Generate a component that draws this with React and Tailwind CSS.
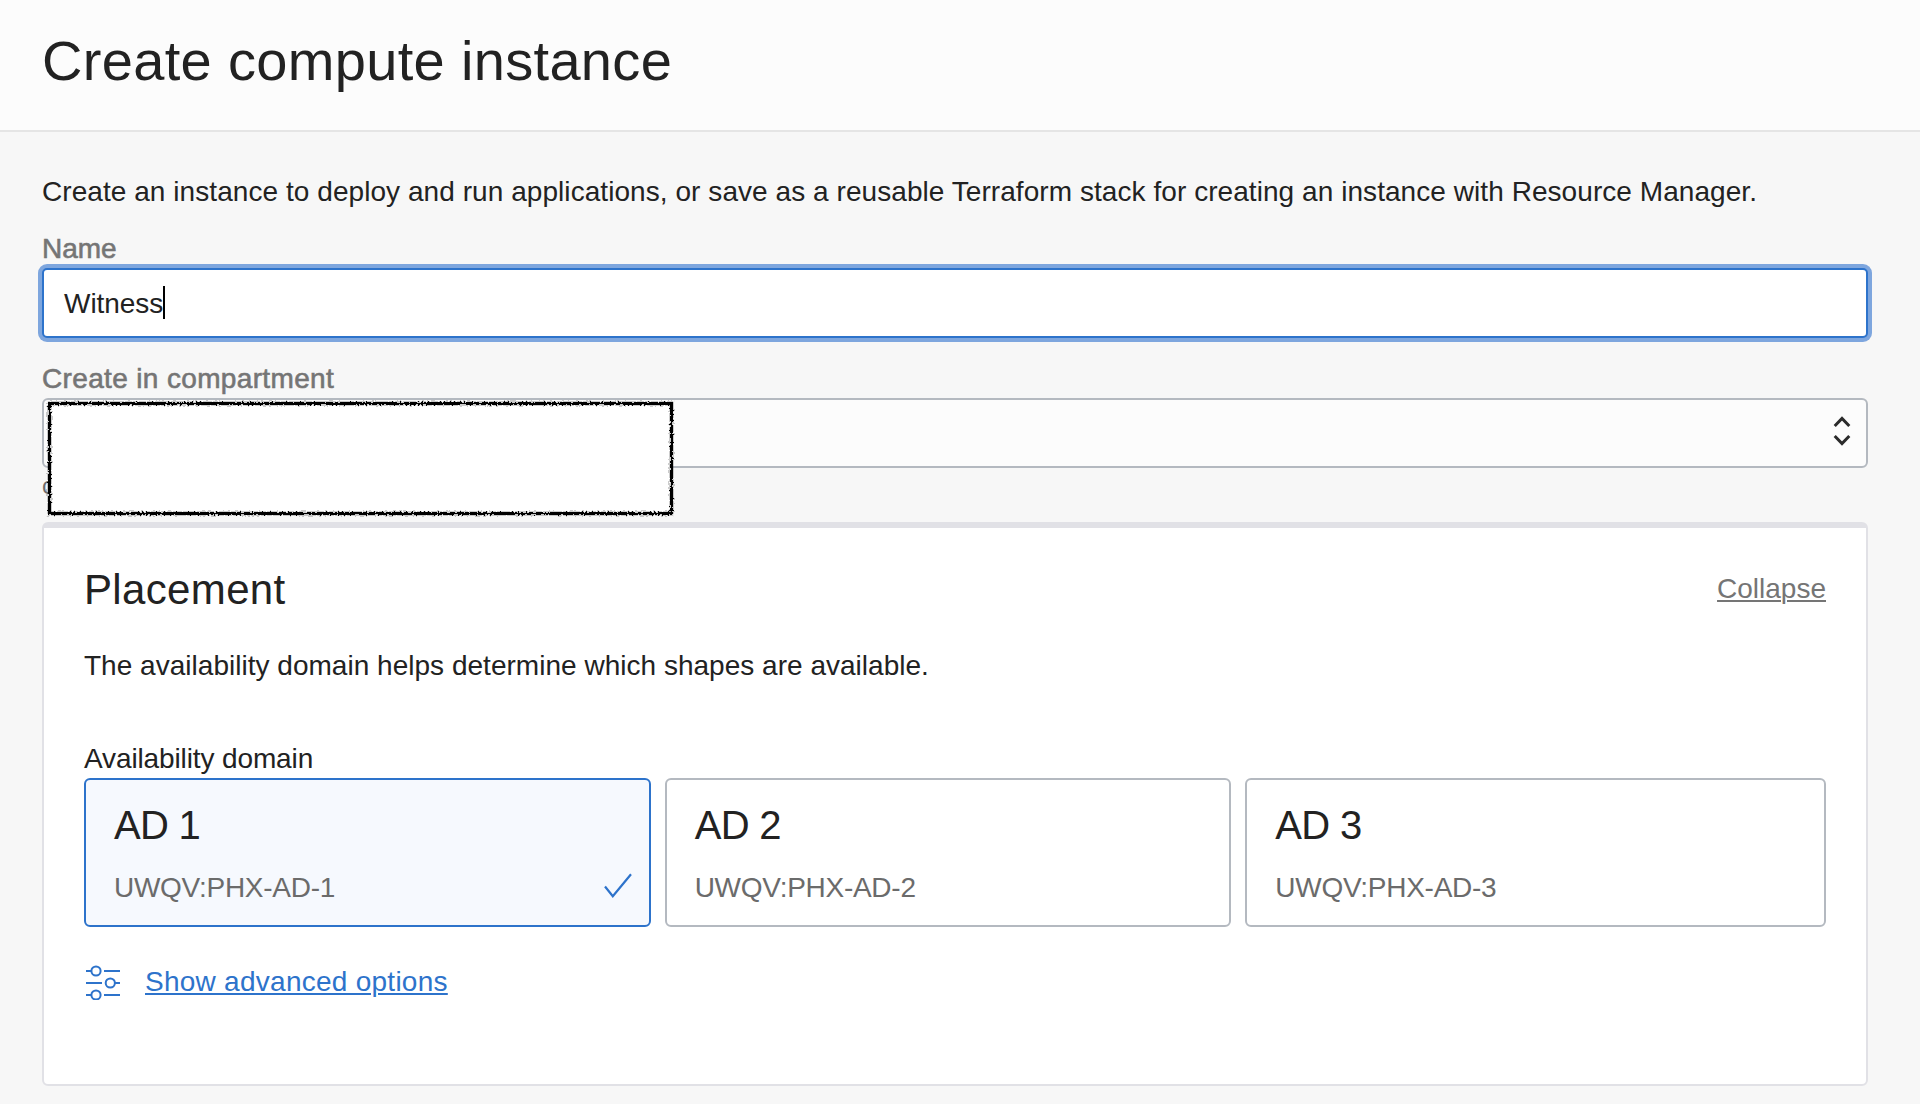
const domains = [
  { title: "AD 1", name: "UWQV:PHX-AD-1", selected: true },
  { title: "AD 2", name: "UWQV:PHX-AD-2" },
  { title: "AD 3", name: "UWQV:PHX-AD-3" },
];

function Header() {
  return (
    <header className="h-[132px] border-b-2 border-[#e5e5e5] bg-[#fcfcfc] px-[42px] pt-[29px]">
      <h1 className="text-[56px] leading-16 tracking-[0.33px]">Create compute instance</h1>
    </header>
  );
}

function Label({ children, className = "" }) {
  return (
    <label
      className={
        "mt-[25px] mb-[3px] block leading-8 text-[#757575] [-webkit-text-stroke:0.6px_#757575] " + className
      }
    >
      {children}
    </label>
  );
}

function NameInput() {
  return (
    <div className="flex h-[70px] items-center rounded-[5px] border-2 border-[#2d73cb] bg-white pl-5 ring-4 ring-[#7ea6de]">
      <span className="mt-0.5 leading-8 tracking-[-0.05px]">Witness</span>
      <span className="-mt-0.5 h-[33px] w-0.5 bg-black" />
    </div>
  );
}

function CompartmentSelect() {
  return (
    <div className="flex h-[70px] items-center justify-end rounded-md border-2 border-[#b4b9c0] bg-[#fcfcfc] pr-3.5">
      <svg width="20" height="34" viewBox="0 0 20 34" fill="none" stroke="#2b2b2b" strokeWidth="3" className="-mt-1">
        <path d="M2.700 12 10 4.500l7.300 7.500M2.700 22 10 29.500l7.300-7.500" />
      </svg>
    </div>
  );
}

function Redaction() {
  return (
    <svg className="absolute top-0 left-0" width="640" height="122" viewBox="0 0 640 122">
      <defs>
        <filter id="rough" x="-2%" y="-8%" width="104%" height="116%">
          <feTurbulence type="fractalNoise" baseFrequency="0.5" numOctaves="2" seed="4" />
          <feDisplacementMap in="SourceGraphic" scale="4" xChannelSelector="R" yChannelSelector="G" />
        </filter>
      </defs>
      <rect x="7.500" y="5.500" width="622" height="110" fill="white" />
      <rect
        x="7.500"
        y="5.500"
        width="622"
        height="110"
        fill="none"
        stroke="black"
        strokeWidth="3.400"
        filter="url(#rough)"
      />
    </svg>
  );
}

function DomainCard({ title, name, selected }) {
  return (
    <div
      className={
        selected
          ? "mr-3.5 flex h-[149px] justify-between rounded-md border-2 border-[#2d73cb] bg-[#f6f9fe] pt-[21px] pl-7"
          : "mr-3.5 flex h-[149px] justify-between rounded-md border-2 border-[#b4b9c0] bg-white pt-[21px] pl-7 last:mr-0"
      }
    >
      <div>
        <h3 className="text-[40px] leading-12 tracking-[-0.7px]">{title}</h3>
        <p className="mt-[23px] leading-8 tracking-[-0.27px] text-[#6b6b6b]">{name}</p>
      </div>
      {selected && (
        <svg width="30" height="28" viewBox="0 0 30 28" fill="none" stroke="#2d73cb" strokeWidth="2.200" className="mt-[70px] mr-4">
          <path d="m2 15.500 7.800 9.800L28 3.300" />
        </svg>
      )}
    </div>
  );
}

function SlidersIcon() {
  return (
    <svg width="36" height="36" viewBox="0 0 36 36" fill="none" stroke="#2d73cb" strokeWidth="2">
      <path d="M2 7h5M20 7h16M2 19h16M31 19h5M2 31h5M20 31h16" />
      <circle cx="12" cy="7" r="4.600" />
      <circle cx="26.300" cy="19" r="4.600" />
      <circle cx="12" cy="31" r="4.600" />
    </svg>
  );
}

function Placement() {
  return (
    <section className="h-[564px] rounded-md border-2 border-t-6 border-[#e1e1e6] bg-white px-10 pt-[37px]">
      <div className="flex items-start justify-between">
        <h2 className="mt-px text-[42px] leading-12 tracking-[0.35px]">Placement</h2>
        <a className="mt-2 leading-8 text-[#757575] underline decoration-2 underline-offset-2">Collapse</a>
      </div>
      <p className="mt-9 leading-8 tracking-[0.02px]">
        The availability domain helps determine which shapes are available.
      </p>
      <p className="mt-[61px] mb-[3px] leading-8 tracking-[-0.12px]">Availability domain</p>
      <div className="grid grid-cols-3">
        {domains.map((d) => (
          <DomainCard key={d.title} {...d} />
        ))}
      </div>
      <div className="mt-[37px] flex items-start gap-[25px]">
        <SlidersIcon />
        <a className="mt-0.5 leading-8 tracking-[0.26px] text-[#2d73cb] underline decoration-2 underline-offset-2">
          Show advanced options
        </a>
      </div>
    </section>
  );
}

export default function App() {
  return (
    <div className="h-[1104px] w-[1920px] overflow-hidden bg-[#f7f7f7] font-['Liberation_Sans',Arial,sans-serif] text-[28px] text-[#222222]">
      <Header />
      <main className="pt-11 pr-[52px] pl-[42px]">
        <p className="leading-8 tracking-[0.06px] whitespace-nowrap">
          Create an instance to deploy and run applications, or save as a reusable Terraform stack for creating an
          instance with Resource Manager.
        </p>
        <Label>Name</Label>
        <NameInput />
        <Label className="tracking-[0.35px]">Create in compartment</Label>
        <div className="relative h-[124px]">
          <CompartmentSelect />
          <p className="mt-0.5 text-[24px] leading-8 text-[#6b6b6b]">c</p>
          <Redaction />
        </div>
        <Placement />
      </main>
    </div>
  );
}
